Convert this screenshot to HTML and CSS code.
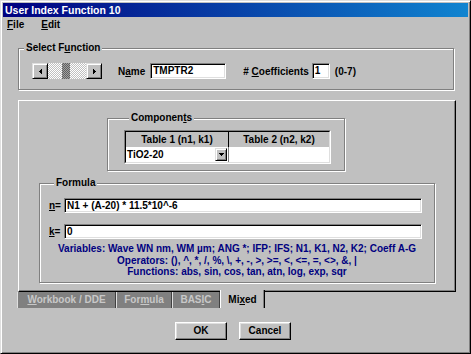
FILE: index.html
```html
<!DOCTYPE html>
<html>
<head>
<meta charset="utf-8">
<link rel="stylesheet" href="styles.css">
</head>
<body>
<div class="window">
  <div class="titlebar">User Index Function 10</div>
  <div class="menubar">
    <span class="menu"><u>F</u>ile</span>
    <span class="menu"><u>E</u>dit</span>
  </div>
  <div class="client">
    <fieldset class="group select-fn">
      <legend>Select F<u>u</u>nction</legend>
      <div class="sf-row">
        <div class="hscroll">
          <div class="sbtn"><svg width="3" height="5" viewBox="0 0 3 5"><path d="M2 0h1v5h-1zM1 1h1v3h-1zM0 2h1v1h-1z" fill="#000"/></svg></div>
          <div class="track"><div class="thumb"></div></div>
          <div class="sbtn"><svg width="3" height="5" viewBox="0 0 3 5"><path d="M0 0h1v5h-1zM1 1h1v3h-1zM2 2h1v1h-1z" fill="#000"/></svg></div>
        </div>
        <span class="lbl name-lbl">N<u>a</u>me</span>
        <div class="textbox name-box">TMPTR2</div>
        <span class="lbl coef-lbl"># <u>C</u>oefficients</span>
        <div class="textbox coef-box">1</div>
        <span class="lbl range">(0-7)</span>
      </div>
    </fieldset>

    <div class="tabpanel">
      <fieldset class="group components">
        <legend>Componen<u>t</u>s</legend>
        <div class="grid-outer">
          <div class="grid-inner">
            <div class="grow head">
              <div class="cell c1">Table 1 (n1, k1)</div>
              <div class="cell c2">Table 2 (n2, k2)</div>
            </div>
            <div class="grow body">
              <div class="cell c1 combo">
                <span class="combo-text">TiO2-20</span>
                <span class="dropbtn"><svg width="5" height="3" viewBox="0 0 5 3"><path d="M0 0h5v1h-5zM1 1h3v1h-3zM2 2h1v1h-1z" fill="#000"/></svg></span>
              </div>
              <div class="cell c2"></div>
            </div>
          </div>
        </div>
      </fieldset>

      <fieldset class="group formula">
        <legend>Formula</legend>
        <div class="frow">
          <span class="flbl"><u>n</u>=</span>
          <div class="textbox fbox">N1 + (A-20) * 11.5*10^-6</div>
        </div>
        <div class="frow krow">
          <span class="flbl"><u>k</u>=</span>
          <div class="textbox fbox">0</div>
        </div>
        <div class="help">
          <div>Variables: Wave WN nm, WM µm; ANG *; IFP; IFS; N1, K1, N2, K2; Coeff A-G</div>
          <div>Operators: (), ^, *, /, %, \, +, -, &gt;, &gt;=, &lt;, &lt;=, =, &lt;&gt;, &amp;, |</div>
          <div>Functions: abs, sin, cos, tan, atn, log, exp, sqr</div>
        </div>
      </fieldset>
    </div>

    <div class="tabs">
      <div class="tab t1"><u>W</u>orkbook / DDE</div>
      <div class="tab t2">For<u>m</u>ula</div>
      <div class="tab t3">BAS<u>I</u>C</div>
      <div class="tab t4 active">Mi<u>x</u>ed</div>
    </div>

    <div class="buttons">
      <div class="btn">OK</div>
      <div class="btn">Cancel</div>
    </div>
  </div>
</div>
</body>
</html>
```

FILE: styles.css
```css
* { box-sizing: border-box; }
html, body { margin: 0; padding: 0; }
body {
  background: #c0c0c0;
  font-family: "Liberation Sans", Arial, sans-serif;
  font-size: 10px;
  font-weight: bold;
  color: #000;
}
u { text-decoration-thickness: 1px; text-underline-offset: 1px; }

.window {
  width: 471px;
  height: 354px;
  border: 1px solid;
  border-color: #dfdfdf #000 #000 #dfdfdf;
  box-shadow: inset 1px 1px #fff, inset -1px -1px #808080;
  padding: 2px;
  display: flex;
  flex-direction: column;
}
.titlebar {
  height: 14px;
  line-height: 14px;
  padding-left: 2px;
  color: #fff;
  font-size: 10.5px;
  background: linear-gradient(to right, #000080, #1084d0);
  white-space: nowrap;
}
.menubar {
  height: 16px;
  line-height: 16px;
  padding-left: 4px;
  display: flex;
}
.menu { margin-right: 17px; }

.client { padding-left: 15px; }

.group {
  margin: 0;
  padding: 0;
  border: 1px solid #808080;
  box-shadow: 1px 1px 0 #fff, inset 1px 1px 0 #fff;
  min-width: 0;
}
.group legend {
  margin-left: 5px;
  padding: 0 2px;
  line-height: 12px;
  background: #c0c0c0;
}

.select-fn { width: 436px; margin-top: 9px; }
.sf-row {
  display: flex;
  align-items: center;
  padding: 9px 0 10px 13px;
}
.hscroll { display: flex; width: 70px; height: 16px; }
.sbtn {
  width: 16px;
  height: 16px;
  background: #c0c0c0;
  border: 1px solid;
  border-color: #dfdfdf #000 #000 #dfdfdf;
  box-shadow: inset 1px 1px #fff, inset -1px -1px #808080;
  display: flex;
  align-items: center;
  justify-content: center;
}
.sbtn svg { display: block; }
.track {
  flex: 1;
  display: flex;
  padding-left: 14px;
  background: repeating-conic-gradient(#fff 0 25%, #c0c0c0 0 50%) 0 0 / 2px 2px;
}
.thumb {
  width: 8px;
  background: repeating-conic-gradient(#606060 0 25%, #a0a0a0 0 50%) 0 0 / 2px 2px;
}
.lbl { white-space: nowrap; }
.name-lbl { margin-left: 16px; }
.textbox {
  height: 16px;
  background: #fff;
  border: 1px solid;
  border-color: #808080 #fff #fff #808080;
  box-shadow: inset 1px 1px #000, inset -1px -1px #dfdfdf;
  padding: 0 2px;
  line-height: 14px;
  white-space: nowrap;
  overflow: hidden;
}
.name-box { margin-left: 5px; width: 76px; }
.coef-lbl { margin-left: 17px; }
.coef-box { margin-left: 3px; width: 18px; }
.range { margin-left: 5px; }

.tabpanel {
  width: 438px;
  height: 192px;
  margin-top: 10px;
  border: 1px solid;
  border-color: #fff #000 #000 #fff;
  box-shadow: inset -1px -1px #808080;
  padding-top: 11px;
}
.components {
  width: 238px;
  margin-left: 88px;
  padding: 6px 13px 6px 16px;
}
.grid-outer {
  width: 207px;
  border: 1px solid;
  border-color: #808080 #fff #fff #808080;
}
.grid-inner {
  border: 1px solid;
  border-color: #000 #dfdfdf #dfdfdf #000;
}
.grow { display: flex; height: 15px; }
.cell { line-height: 15px; }
.c1 { width: 103px; border-right: 1px solid #808080; }
.c2 { flex: 1; }
.head .cell { background: #c0c0c0; text-align: center; }
.head .c1 { border-right-color: #000; }
.body .cell { background: #fff; }
.combo {
  display: flex;
  align-items: center;
  justify-content: space-between;
  padding-left: 1px;
}
.dropbtn {
  width: 12px;
  height: 13px;
  margin-right: 1px;
  background: #c0c0c0;
  border: 1px solid;
  border-color: #dfdfdf #000 #000 #dfdfdf;
  box-shadow: inset 1px 1px #fff, inset -1px -1px #808080;
  display: flex;
  align-items: center;
  justify-content: center;
}
.dropbtn svg { display: block; }

.formula {
  width: 396px;
  margin-top: 6px;
  margin-left: 20px;
  padding: 9px 0 4px 9px;
}
.frow { display: flex; align-items: center; }
.krow { margin-top: 11px; }
.flbl { width: 15px; white-space: nowrap; }
.fbox { width: 358px; height: 15px; line-height: 13px; }
.help {
  margin-top: 4px;
  margin-left: -9px;
  text-align: center;
  color: #000080;
  line-height: 11.5px;
  white-space: nowrap;
}

.tabs { display: flex; margin-left: -1px; }
.tab {
  height: 16px;
  line-height: 16px;
  text-align: center;
  white-space: nowrap;
  background: #808080;
  color: #c8c8c8;
  border-left: 1px solid #dfdfdf;
  border-right: 1px solid #404040;
}
.t1 { width: 99px; }
.t2 { width: 56px; }
.t3 { width: 48px; }
.t4 { width: 45px; }
.tab.active {
  height: 18px;
  margin-top: -2px;
  padding-top: 2px;
  background: #c0c0c0;
  color: #000;
  border-left: 1px solid #fff;
  border-right: 1px solid #000;
  box-shadow: inset -1px 0 #808080;
}

.buttons {
  display: flex;
  gap: 12px;
  margin-top: 14px;
  padding-left: 157px;
}
.btn {
  width: 52px;
  height: 18px;
  line-height: 16px;
  text-align: center;
  border: 1px solid;
  border-color: #fff #000 #000 #fff;
  box-shadow: inset -1px -1px #808080, inset 1px 1px #dfdfdf;
}
```
